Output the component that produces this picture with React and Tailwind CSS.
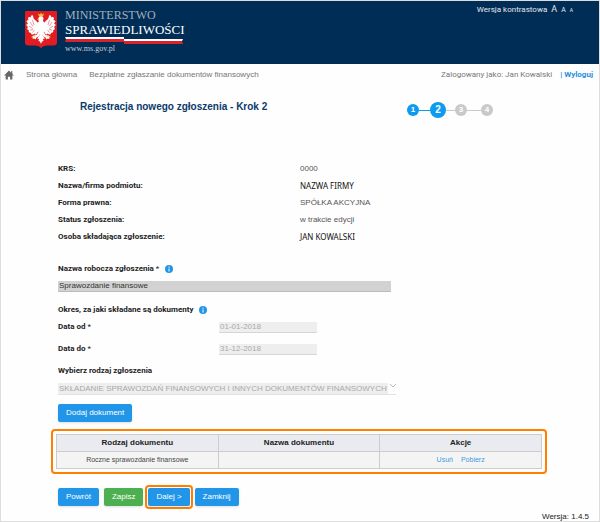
import { clsx } from "clsx";

const details = [
  { label: "KRS:", value: "0000" },
  { label: "Nazwa/firma podmiotu:", value: "NAZWA FIRMY", strong: true },
  { label: "Forma prawna:", value: "SPÓŁKA AKCYJNA" },
  { label: "Status zgłoszenia:", value: "w trakcie edycji" },
  { label: "Osoba składająca zgłoszenie:", value: "JAN KOWALSKI", strong: true },
];

function Wing() {
  return (
    <g>
      <path
        d="M27 25q-4-5-8-8-3-3-3-8-3-1-4 1l-1 3q-3-2-5 1l1 4q-4 0-4 3l3 4q-4 1-3 4l3 3q-3 2-1 5l3 2q-2 3 1 4l3 1q0 4 4 3l3-2q1 3 4 1l5-8z"
        fill="#fff"
      />
      <path d="M15 18l3 10M10 22l6 9M8 30l7 5M10 38l6-1M15 43l4-5" stroke="#e31b23" strokeWidth="0.9" fill="none" />
      <path d="M27 41l-4 7-6 1-4 3 3 1-1 3 4-1 2 2 2-4 6-3z" fill="#fff" />
      <path d="M13 52l5-2 3 1" stroke="#e8c34a" strokeWidth="1.5" fill="none" />
    </g>
  );
}

function Emblem() {
  return (
    <svg viewBox="0 0 64 74" className="h-[37px] w-8 shrink-0" aria-hidden="true">
      <path d="M2 0h60q2 0 2 2v61q0 6-7 6H43q-7 0-11 5-4-5-11-5H7q-7 0-7-6V2q0-2 2-2z" fill="#e31b23" />
      <Wing />
      <g transform="matrix(-1 0 0 1 64 0)">
        <Wing />
      </g>
      <path
        d="M28 12q4-4 8 0 2 3 0 7l3 6q2 8-1 16l-3 8 5 6-4 1 1 4-3 1-2 5-2-5-3-1 1-4-4-1 5-6-3-8q-3-8-1-16l3-5-2-2z"
        fill="#fff"
      />
      <path d="M28 13l-4 4 4 1z" fill="#e8c34a" />
      <path d="M28 11l-2-6 4 2 2-4 2 4 4-2-2 6z" fill="#f0c63c" />
    </svg>
  );
}

function Ribbon() {
  return (
    <svg viewBox="0 0 118 8" className="h-2 w-[118px]" aria-hidden="true">
      <path d="M0 0h59v2H1z" fill="#fff" />
      <path d="M1 2h58v3H0z" fill="#d8232f" />
      <path d="M59 2h59l-1 2H59z" fill="#fff" />
      <path d="M59 4h58l1 3H59z" fill="#d8232f" />
    </svg>
  );
}

function Info() {
  return (
    <svg viewBox="0 0 16 16" className="size-2 shrink-0" aria-hidden="true">
      <circle cx="8" cy="8" r="8" fill="#2196e8" />
      <path d="M8 3v2.4M8 7v6" stroke="#fff" strokeWidth="2" />
    </svg>
  );
}

function Step({ number, done, current }) {
  return (
    <li
      className={clsx(
        "flex items-center justify-center rounded-full font-bold text-white",
        current ? "size-4 text-[10px]" : "size-3 text-[8px]",
        done || current ? "bg-[#0c9bee]" : "bg-[#c9c9c9]"
      )}
    >
      {number}
    </li>
  );
}

function Button({ children, green }) {
  return (
    <button
      type="button"
      className={clsx(
        "h-[18px] rounded-[2px] px-2 text-[8px] text-white shadow-sm",
        green ? "bg-[#4caf50]" : "bg-[#2196e8]"
      )}
    >
      {children}
    </button>
  );
}

function DateRow({ id, label, value }) {
  return (
    <div className="flex h-[22px] items-center">
      <label htmlFor={id} className="w-[161px] font-['Roboto',sans-serif] font-bold">
        {label} <span className="font-normal">*</span>
      </label>
      <input
        id={id}
        defaultValue={value}
        disabled
        className="h-[11px] w-[98px] border-b border-[#d6d6d6] bg-[#eeeeee] px-px text-[8px] text-[#a9a9a9]"
      />
    </div>
  );
}

export default function App() {
  return (
    <div className="flex flex-col border border-[#dddddd] bg-[#fefefe] font-['Liberation_Sans',Arial,sans-serif] text-[8px] leading-3 text-[#222222]">
      <header className="flex h-[63px] items-start justify-between bg-[#002d56] pl-6 pr-[26px]">
        <a href="#" className="flex items-start gap-2 pt-[10px] text-white">
          <Emblem />
          <span className="-mt-[3px] flex flex-col font-['Liberation_Serif',serif]">
            <span className="text-[12px] leading-[14px] text-[#a3afbf]">MINISTERSTWO</span>
            <span className="text-[13px] leading-[15px]">SPRAWIEDLIWOŚCI</span>
            <Ribbon />
            <span className="text-[8px] leading-[8px] text-[#c3cbd4]">www.ms.gov.pl</span>
          </span>
        </a>
        <div className="flex items-baseline gap-1 pt-[2px] font-['Roboto',sans-serif] text-[8px] text-[#e3e8ee]">
          <a href="#">Wersja kontrastowa</a>
          <button type="button" className="text-[9px]">A</button>
          <button type="button" className="text-[7px]">A</button>
          <button type="button" className="text-[5px]">A</button>
        </div>
      </header>

      <nav className="flex items-center pt-[5px] pr-[6px] pl-[3px] text-[#777777]">
        <a href="#" aria-label="Start">
          <svg viewBox="0 0 18 18" className="size-[10px]" fill="#666666" aria-hidden="true">
            <path d="M9 1L0 10h3v7h4v-5h4v5h4v-7h3L15 7V2h-2v3z" />
          </svg>
        </a>
        <a href="#" className="ml-3">Strona główna</a>
        <a href="#" className="ml-3">Bezpłatne zgłaszanie dokumentów finansowych</a>
        <span className="ml-auto font-['Roboto',sans-serif]">Zalogowany jako: Jan Kowalski</span>
        <a href="#" className="ml-2 font-['Roboto',sans-serif] font-bold text-[#1e90e0]">| Wyloguj</a>
      </nav>

      <div className="mt-[15px] flex items-center justify-between pr-[106px] pl-[79px]">
        <h1 className="text-[10px] font-bold text-[#0b3a6b]">Rejestracja nowego zgłoszenia - Krok 2</h1>
        <ol className="flex items-center pt-[6px]">
          <Step number={1} done />
          <li className="h-px w-[11px] bg-[#0c9bee]" />
          <Step number={2} current />
          <li className="h-px w-[9px] bg-[#c9c9c9]" />
          <Step number={3} />
          <li className="h-px w-[14px] bg-[#c9c9c9]" />
          <Step number={4} />
        </ol>
      </div>

      <main className="flex flex-col pt-[42px] pr-[52px] pl-[57px]">
        <dl className="flex flex-col">
          {details.map(({ label, value, strong }) => (
            <div key={label} className="flex h-[17px] items-center">
              <dt className="w-[242px] font-['Roboto',sans-serif] font-bold">{label}</dt>
              <dd className={strong ? "font-['Noto_Sans',sans-serif] text-[#111111]" : "text-[#555555]"}>{value}</dd>
            </div>
          ))}
        </dl>

        <form className="flex flex-col pt-[18px]">
          <div className="flex items-center gap-[6px]">
            <label htmlFor="name" className="font-['Roboto',sans-serif] font-bold">
              Nazwa robocza zgłoszenia <span className="font-normal">*</span>
            </label>
            <Info />
          </div>
          <input
            id="name"
            defaultValue="Sprawozdanie finansowe"
            className="mt-[6px] mr-[156px] h-[11px] border-b border-[#bbbbbb] bg-[#d2d2d2] px-px text-[8px] text-[#333333]"
          />
          <div className="mt-3 flex items-center gap-[6px] font-['Roboto',sans-serif] font-bold">
            Okres, za jaki składane są dokumenty
            <Info />
          </div>
          <DateRow id="from" label="Data od" value="01-01-2018" />
          <DateRow id="to" label="Data do" value="31-12-2018" />
          <label htmlFor="kind" className="mt-[5px] font-['Roboto',sans-serif] font-bold">Wybierz rodzaj zgłoszenia</label>
          <div className="mt-[6px] flex h-3 w-[338px] border-b border-[#e2e2e2]">
            <select
              id="kind"
              disabled
              className="h-[11px] min-w-0 flex-1 appearance-none bg-[#eeeeee] pl-px text-[8px] text-[#a9a9a9] opacity-100"
            >
              <option>SKŁADANIE SPRAWOZDAŃ FINANSOWYCH I INNYCH DOKUMENTÓW FINANSOWYCH</option>
            </select>
            <svg viewBox="0 0 8 8" className="size-2 shrink-0" fill="none" stroke="#bbbbbb" aria-hidden="true">
              <path d="M2 1l3 3 3-3" />
            </svg>
          </div>
          <div className="mt-[9px] flex">
            <Button>Dodaj dokument</Button>
          </div>
        </form>

        <div className="mt-[7px] -ml-[7px] rounded-[4px] border-2 border-[#ff8000] p-[3px]">
          <table className="w-full table-fixed border-collapse text-center">
            <thead>
              <tr className="h-[17px] bg-[#e9ebf0]">
                <th className="border border-[#cccccc]">Rodzaj dokumentu</th>
                <th className="border border-[#cccccc]">Nazwa dokumentu</th>
                <th className="border border-[#cccccc]">Akcje</th>
              </tr>
            </thead>
            <tbody>
              <tr className="h-[17px] bg-[#f4f4f4] text-[7px] text-[#444444]">
                <td className="border border-[#cccccc]">Roczne sprawozdanie finansowe</td>
                <td className="border border-[#cccccc]" />
                <td className="border border-[#cccccc] text-[#3a9be0]">
                  <a href="#">Usuń</a>
                  <a href="#" className="ml-2">Pobierz</a>
                </td>
              </tr>
            </tbody>
          </table>
        </div>

        <div className="mt-[11px] flex h-6 items-center">
          <Button>Powrót</Button>
          <span className="ml-[5px] flex"><Button green>Zapisz</Button></span>
          <span className="ml-[2px] flex rounded-[4px] border-2 border-[#ff8000] p-px">
            <Button>Dalej &gt;</Button>
          </span>
          <span className="ml-[2px] flex"><Button>Zamknij</Button></span>
        </div>
      </main>

      <footer className="pt-[4px] pr-[10px] text-right leading-[8px]">Wersja: 1.4.5</footer>
    </div>
  );
}
